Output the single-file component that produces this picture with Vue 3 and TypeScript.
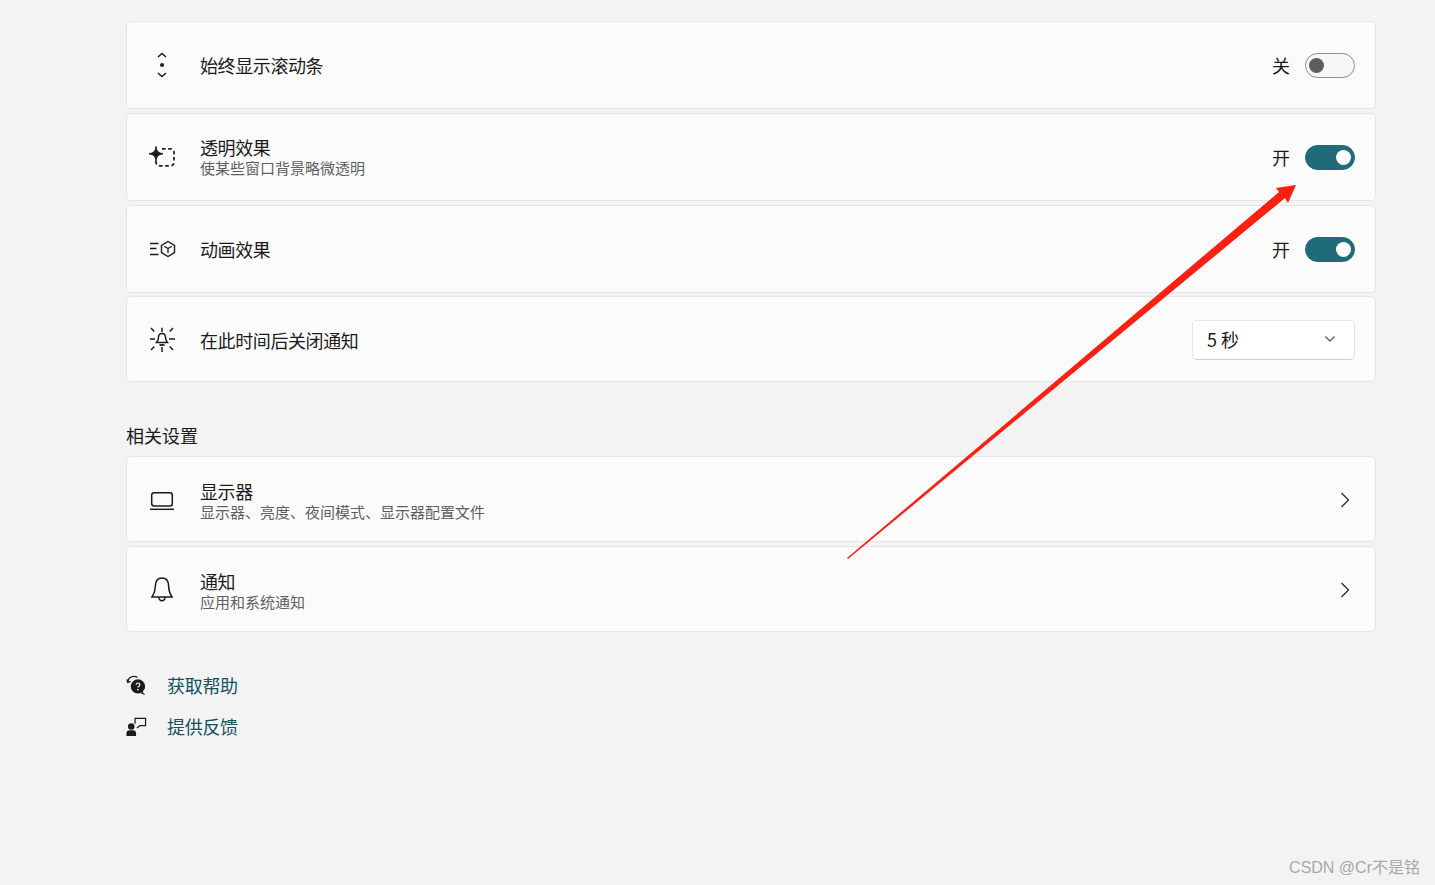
<script setup lang="ts">
interface Row {
  id: string
  title: string
  sub?: string
  toggle?: boolean
}

const rows: Row[] = [
  { id: 'scroll', title: '始终显示滚动条', toggle: false },
  { id: 'glass', title: '透明效果', sub: '使某些窗口背景略微透明', toggle: true },
  { id: 'motion', title: '动画效果', toggle: true },
  { id: 'timeout', title: '在此时间后关闭通知' },
]

const related: Row[] = [
  { id: 'display', title: '显示器', sub: '显示器、亮度、夜间模式、显示器配置文件' },
  { id: 'bell', title: '通知', sub: '应用和系统通知' },
]
</script>

<template>
  <div class="page">
    <div class="list">
      <div v-for="row in rows" :key="row.id" class="card" :class="row.id">
        <span class="icon">
          <svg width="28" height="28" viewBox="0 0 28 28" fill="none" stroke="#1b1b1b" stroke-width="1.2">
            <template v-if="row.id === 'scroll'">
              <path d="M10 6 14 2.500 18 6" stroke-width="1.500" />
              <circle cx="14" cy="14" r="2" fill="#1b1b1b" stroke="none" />
              <path d="M10 22 14 25.500 18 22" stroke-width="1.500" />
            </template>
            <template v-else-if="row.id === 'glass'">
              <path d="M14 5.800h8.500c2 0 3.500 1.500 3.500 3.500v10c0 2-1.500 3.500-3.500 3.500h-11c-2 0-3.500-1.500-3.500-3.500v-2" stroke-width="1.700" stroke-dasharray="3.600 2.600" />
              <path d="M8 3.500C8.800 8.500 10 9.800 15 10.800 10 11.800 8.800 13 8 18 7.200 13 6 11.800 1 10.800 6 9.800 7.200 8.500 8 3.500Z" fill="#1b1b1b" stroke-width="1" />
            </template>
            <template v-else-if="row.id === 'motion'">
              <path d="M2 8.500h8.500M2 13.500h6.500M2 19.500h8.500" stroke-width="1.500" />
              <path d="M20 6.500 26.500 10.300v7.400L20 21.500 13.500 17.700v-7.400Z" stroke-width="1.400" />
              <path d="M16.200 11.200 20 13.500l3.800-2.300M20 13.500v4.500" stroke-width="1.300" />
            </template>
            <template v-else>
              <path d="M14 8.500c-2.300 0-3.500 1.800-3.500 4 0 2.200-.7 3.500-2 5h11c-1.300-1.500-2-2.800-2-5 0-2.200-1.200-4-3.500-4Z" stroke-width="1.500" />
              <path d="M11.500 20h5" stroke-width="1.800" />
              <path d="M14 2.700V7M14 22v5M2 14h5M21 14h6M3 3l3.300 3.500M25 3l-3.300 3.500M3 25l3.300-3.500M25 25l-3.300-3.500" stroke-width="1.500" />
            </template>
          </svg>
        </span>
        <div class="text">
          <div class="title">{{ row.title }}</div>
          <div v-if="row.sub" class="sub">{{ row.sub }}</div>
        </div>
        <template v-if="row.toggle !== undefined">
          <span class="state">{{ row.toggle ? '开' : '关' }}</span>
          <span class="switch" :class="{ on: row.toggle }"><i class="knob" /></span>
        </template>
        <div v-else class="select">
          <span>5 秒</span>
          <svg width="12" height="8" viewBox="0 0 12 8" fill="none" stroke="#5f5f5f" stroke-width="1.300">
            <path d="M1.500 1.500 6 6l4.500-4.500" />
          </svg>
        </div>
      </div>
    </div>

    <h2 class="heading">相关设置</h2>

    <div class="list">
      <div v-for="row in related" :key="row.id" class="card related">
        <span class="icon">
          <svg width="28" height="28" viewBox="0 0 28 28" fill="none" stroke="#1b1b1b" stroke-width="1.500">
            <template v-if="row.id === 'display'">
              <rect x="3.700" y="7.700" width="20.600" height="13.300" rx="2.500" />
              <path d="M2 24.300h24" />
            </template>
            <template v-else>
              <path d="M14 3C8.800 3 7.300 7 7.300 11.500c0 5-1.300 7.500-3.300 10.500h20c-2-3-3.300-5.500-3.300-10.500C20.700 7 19.200 3 14 3Z" />
              <path d="M11 22.300c0 2 1.200 3.400 3 3.400s3-1.400 3-3.400" />
            </template>
          </svg>
        </span>
        <div class="text">
          <div class="title">{{ row.title }}</div>
          <div class="sub">{{ row.sub }}</div>
        </div>
        <svg class="chevron" width="12" height="18" viewBox="0 0 12 18" fill="none" stroke="#333" stroke-width="1.400">
          <path d="M2.500 2 9.500 9l-7 7" />
        </svg>
      </div>
    </div>

    <div class="links">
      <a class="link">
        <svg width="21" height="21" viewBox="0 0 22 22" fill="none">
          <path d="M1.800 7.500C2.300 3.800 5 1.500 8.500 1.500c1.300 0 2.500.3 3.500 1M1 4.500l.8 3.200 3-1" stroke="#1b1b1b" stroke-width="1.300" />
          <circle cx="12.500" cy="12" r="7.500" fill="#1b1b1b" />
          <path d="M17 17.500 20.500 21 15.500 19.500Z" fill="#1b1b1b" />
          <path d="M10.500 10.200c.2-1.200 1-1.800 2-1.800 1.200 0 2 .8 2 1.800 0 1.500-2 1.500-2 3" stroke="#fff" stroke-width="1.200" />
          <circle cx="12.500" cy="15.300" r=".9" fill="#fff" />
        </svg>
        <span>获取帮助</span>
      </a>
      <a class="link">
        <svg width="21" height="21" viewBox="0 0 22 22" fill="none">
          <circle cx="5.500" cy="11" r="3.400" fill="#1b1b1b" />
          <path d="M0.500 21v-3c0-1.700 1.300-3 3-3h4c1.700 0 3 1.300 3 3v3Z" fill="#1b1b1b" />
          <path d="M9.500 8V2.500h11v7.500h-6l-3 2.500" stroke="#1b1b1b" stroke-width="1.300" />
        </svg>
        <span>提供反馈</span>
      </a>
    </div>

    <svg class="arrow" width="1435" height="885" viewBox="0 0 1435 885">
      <polygon
        points="847,558 1279,192 1276,188 1296,185 1288,203 1285,198 848,559"
        fill="#fb2012"
      />
    </svg>
    <div class="mark">CSDN @Cr不是铭</div>
  </div>
</template>

<style>
html,
body {
  margin: 0;
  background: #f3f3f3;
}
</style>

<style scoped>
.page {
  position: relative;
  box-sizing: border-box;
  height: 885px;
  padding: 21px 59px 0 126px;
  overflow: hidden;
  font-family: "Noto Sans CJK SC", "Noto Sans", sans-serif;
  font-weight: 400;
  color: #1b1b1b;
}

.list {
  display: flex;
  flex-direction: column;
  gap: 4px;
}

.card {
  box-sizing: border-box;
  display: flex;
  align-items: center;
  height: 88px;
  padding: 0 20px 0 21px;
  background: #fbfbfb;
  border: 1px solid #e5e5e5;
  border-radius: 5px;
}

.timeout {
  height: 86px;
  margin-top: -1px;
}

.related {
  height: 86px;
}

.icon {
  display: flex;
  width: 28px;
  height: 28px;
  margin-right: 24px;
}

.text {
  flex: 1;
  min-width: 0;
}

.timeout .text {
  padding-top: 2px;
}

.related .text {
  padding-top: 4px;
}

.title {
  font-size: 18px;
  line-height: 22px;
  letter-spacing: -0.4px;
}

.sub {
  font-size: 15px;
  line-height: 20px;
  color: #5f5f5f;
}

.state {
  margin-right: 15px;
  font-size: 18px;
}

.switch {
  box-sizing: border-box;
  display: flex;
  align-items: center;
  width: 50px;
  height: 25px;
  padding: 0 3px;
  background: #f6f6f6;
  border: 1px solid #8f8f8f;
  border-radius: 13px;
}

.knob {
  width: 15px;
  height: 15px;
  background: #5d5d5d;
  border-radius: 50%;
}

.switch.on {
  justify-content: flex-end;
  background: #1f6b7a;
  border-color: #1f6b7a;
}

.switch.on .knob {
  background: #fff;
}

.select {
  box-sizing: border-box;
  display: flex;
  align-items: center;
  justify-content: space-between;
  width: 163px;
  height: 40px;
  margin-top: 2px;
  padding: 0 18px 2px 14px;
  background: #fff;
  border: 1px solid #e5e5e5;
  border-bottom-color: #cfcfcf;
  border-radius: 5px;
  font-size: 18px;
}

.chevron {
  margin-top: 2px;
  margin-right: 4px;
}

.heading {
  margin: 40px 0 8px;
  font-size: 18px;
  font-weight: 400;
  line-height: 26px;
}

.links {
  display: flex;
  flex-direction: column;
  gap: 19px;
  margin-top: 42px;
}

.link {
  display: flex;
  align-items: center;
  gap: 20px;
  height: 22px;
  font-size: 18px;
  letter-spacing: -0.3px;
  color: #17505f;
}

.arrow {
  position: absolute;
  top: 0;
  left: 0;
  pointer-events: none;
}

.mark {
  position: absolute;
  right: 15px;
  bottom: 6px;
  font-family: "Liberation Sans", "Noto Sans CJK SC", sans-serif;
  font-size: 16px;
  line-height: 22px;
  color: #a8a8a8;
}
</style>
